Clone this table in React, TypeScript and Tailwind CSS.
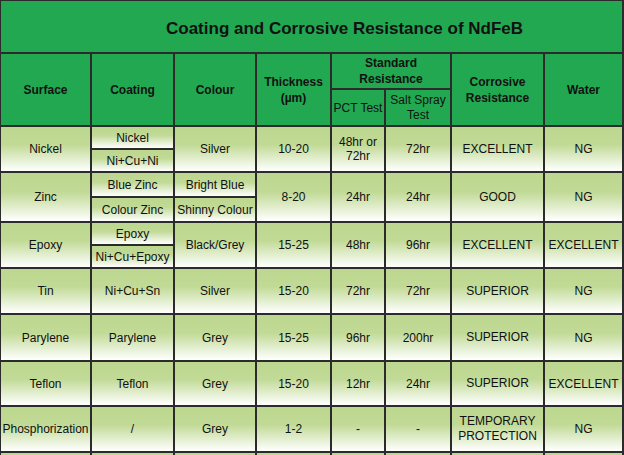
import React from 'react';

const cell = 'border-2 border-[#2b2b2b] text-center align-middle p-0 bg-[linear-gradient(to_bottom,#bcd78f_0%,#c1da96_40%,#ffffff_100%)]';
const head = 'border-2 border-[#2b2b2b] text-center align-middle p-0 font-bold bg-[#21a851]';

type Row = {
  surface: string;
  coating: string | [string, string];
  colour: string | [string, string];
  thick: string;
  pct: React.ReactNode;
  salt: string;
  res: React.ReactNode;
  water: string;
  h: number;
};

const rows: Row[] = [
  { surface: 'Nickel', coating: ['Nickel', 'Ni+Cu+Ni'], colour: 'Silver', thick: '10-20', pct: <>48hr or<br />72hr</>, salt: '72hr', res: 'EXCELLENT', water: 'NG', h: 46 },
  { surface: 'Zinc', coating: ['Blue Zinc', 'Colour Zinc'], colour: ['Bright Blue', 'Shinny Colour'], thick: '8-20', pct: '24hr', salt: '24hr', res: 'GOOD', water: 'NG', h: 50 },
  { surface: 'Epoxy', coating: ['Epoxy', 'Ni+Cu+Epoxy'], colour: 'Black/Grey', thick: '15-25', pct: '48hr', salt: '96hr', res: 'EXCELLENT', water: 'EXCELLENT', h: 46 },
  { surface: 'Tin', coating: 'Ni+Cu+Sn', colour: 'Silver', thick: '15-20', pct: '72hr', salt: '72hr', res: 'SUPERIOR', water: 'NG', h: 46 },
  { surface: 'Parylene', coating: 'Parylene', colour: 'Grey', thick: '15-25', pct: '96hr', salt: '200hr', res: 'SUPERIOR', water: 'NG', h: 47 },
  { surface: 'Teflon', coating: 'Teflon', colour: 'Grey', thick: '15-20', pct: '12hr', salt: '24hr', res: 'SUPERIOR', water: 'EXCELLENT', h: 45 },
  { surface: 'Phosphorization', coating: '/', colour: 'Grey', thick: '1-2', pct: '-', salt: '-', res: <>TEMPORARY<br />PROTECTION</>, water: 'NG', h: 46 },
];

function DataRows({ r }: { r: Row }) {
  const split = Array.isArray(r.coating) || Array.isArray(r.colour);
  const span = split ? 2 : 1;
  const top = r.h / 2;
  const first = (
    <tr style={{ height: split ? top : r.h }}>
      <td rowSpan={span} className={cell}>{r.surface}</td>
      <td rowSpan={Array.isArray(r.coating) ? 1 : span} className={cell}>{Array.isArray(r.coating) ? r.coating[0] : r.coating}</td>
      <td rowSpan={Array.isArray(r.colour) ? 1 : span} className={cell}>{Array.isArray(r.colour) ? r.colour[0] : r.colour}</td>
      <td rowSpan={span} className={cell}>{r.thick}</td>
      <td rowSpan={span} className={`${cell} leading-[14px]`}>{r.pct}</td>
      <td rowSpan={span} className={cell}>{r.salt}</td>
      <td rowSpan={span} className={`${cell} leading-[15px]`}>{r.res}</td>
      <td rowSpan={span} className={cell}>{r.water}</td>
    </tr>
  );
  if (!split) return first;
  return (
    <>
      {first}
      <tr style={{ height: r.h - top }}>
        {Array.isArray(r.coating) && <td className={cell}>{r.coating[1]}</td>}
        {Array.isArray(r.colour) && <td className={cell}>{r.colour[1]}</td>}
      </tr>
    </>
  );
}

export default function App() {
  return (
    <div className="w-[624px] h-[455px] overflow-hidden bg-white font-['Liberation_Sans',Arial,sans-serif] text-[12px] text-[#111]">
      <table className="table-fixed border-collapse w-[623px] -mt-[1px] -ml-[1px]">
        <colgroup>
          <col className="w-[91px]" />
          <col className="w-[83px]" />
          <col className="w-[82px]" />
          <col className="w-[75px]" />
          <col className="w-[54px]" />
          <col className="w-[66px]" />
          <col className="w-[93px]" />
          <col className="w-[79px]" />
        </colgroup>
        <tbody>
          <tr className="h-[53px]">
            <td colSpan={8} className={`${head} text-[17px] pl-[66px] pt-[4px]`}>Coating and Corrosive Resistance of NdFeB</td>
          </tr>
          <tr className="h-[36px]">
            <td rowSpan={2} className={head}>Surface</td>
            <td rowSpan={2} className={head}>Coating</td>
            <td rowSpan={2} className={head}>Colour</td>
            <td rowSpan={2} className={`${head} leading-[16px]`}>Thickness<br />(µm)</td>
            <td colSpan={2} className={`${head} leading-[16px]`}>Standard<br />Resistance</td>
            <td rowSpan={2} className={`${head} leading-[16px]`}>Corrosive<br />Resistance</td>
            <td rowSpan={2} className={head}>Water</td>
          </tr>
          <tr className="h-[37px]">
            <td className={`${head} font-normal whitespace-nowrap`}>PCT Test</td>
            <td className={`${head} font-normal leading-[15px]`}>Salt Spray<br />Test</td>
          </tr>
          {rows.map(r => (
            <DataRows key={r.surface} r={r} />
          ))}
          <tr className="h-[20px]">
            {Array.from({ length: 8 }).map((_, i) => (
              <td key={i} className={cell}></td>
            ))}
          </tr>
        </tbody>
      </table>
    </div>
  );
}
